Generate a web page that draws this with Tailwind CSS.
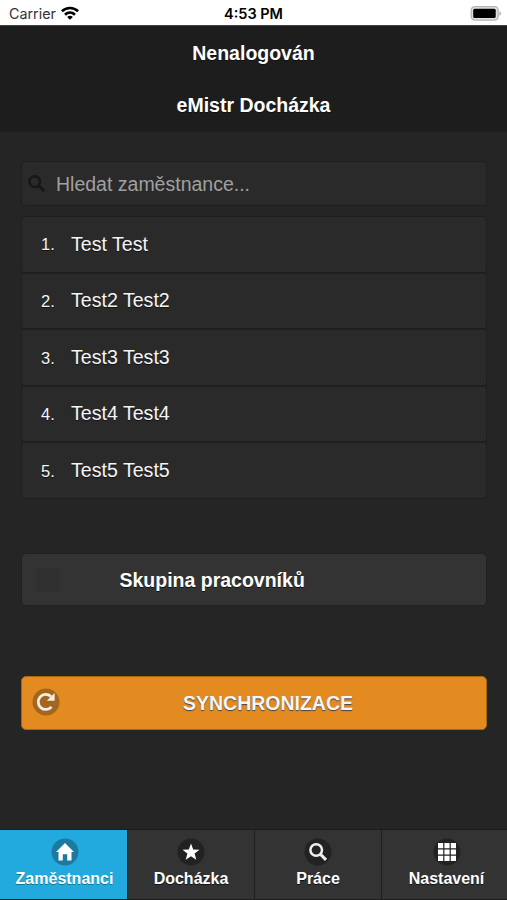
<!DOCTYPE html>
<html lang="cs">
<head>
<meta charset="utf-8">
<title>eMistr Docházka</title>
<script src="https://cdn.jsdelivr.net/npm/@tailwindcss/browser@4"></script>
</head>
<body class="bg-[#252525]">
<div class="w-[507px] h-[900px] flex flex-col overflow-hidden bg-[#252525] font-['Liberation_Sans',Arial,sans-serif] text-white">
  <div class="h-[25px] shrink-0 bg-white text-black grid grid-cols-3 items-center pt-[2px] font-[Inter,sans-serif]">
    <div class="flex items-center gap-[5px] pl-[9px]">
      <span class="text-[14.3px] leading-[20px] text-[#333]">Carrier</span>
      <svg class="w-[18px] h-[14px] -mt-[2px]" viewBox="0 0 18 14" fill="none" stroke="#000" stroke-width="2.7"><path d="M.9 5.2C5.5.9 12.500.9 17.100 5.200M4 8.700C6.900 5.900 11.100 5.900 14 8.700"/><path d="M9 13.800 6.100 10.900Q9 8.800 11.900 10.900Z" fill="#000" stroke="none"/></svg>
    </div>
    <div class="text-center text-[14.5px] font-semibold leading-[20px]">4:53 PM</div>
    <div class="flex justify-end pr-[5px] -mt-[1px]">
      <svg class="w-[32px] h-[15px]" viewBox="0 0 32 15"><rect x="1.200" y=".7" width="27" height="13.400" rx="3.600" fill="#e0e0e0" stroke="#b5b5b5" stroke-width="1.300"/><rect x="3.200" y="2.800" width="22.500" height="9.200" rx="1.500"/><path d="M29.500 5v5q3-2.500 0-5Z" fill="#aaa"/></svg>
    </div>
  </div>
  <header class="h-[107px] shrink-0 bg-[#1d1d1d] border-t border-[#444] text-center font-bold text-[19.5px] leading-[52px] [text-shadow:0_1px_0_#111]">
    <h1 class="h-[52px] pt-[1px]">Nenalogován</h1>
    <h1 class="h-[52px] pt-[1px]">eMistr Docházka</h1>
  </header>
  <main class="flex-1 min-h-0 pl-[21px] pr-[20px] pt-[29px]">
    <div class="h-[45px] flex items-center rounded-[4px] border border-[#1f1f1f] bg-[#2a2a2a] pl-[6px]">
      <svg class="w-[18px] h-[18px]" viewBox="0 0 18 18" fill="none" stroke="#171717" stroke-width="2.600"><circle cx="6.700" cy="6.700" r="5.300"/><path d="m10.700 10.700 5.600 5.600" stroke-width="3"/></svg>
      <span class="ml-[10px] text-[19.5px] leading-[22px] text-[#a0a0a0]">Hledat zaměstnance...</span>
    </div>
    <ol class="mt-[10px] rounded-[4px] border border-[#1f1f1f] bg-[#1f1f1f] overflow-hidden flex flex-col gap-[2px] h-[283px] text-[#f5f5f5] [text-shadow:0_1px_0_#111]">
      <li class="flex-1 flex items-center bg-[#2a2a2a] rounded-[2px] pl-[19px]"><span class="w-[30px] text-[16.5px] pt-[1px]">1.</span><span class="text-[19.6px]">Test Test</span></li>
      <li class="flex-1 flex items-center bg-[#2a2a2a] rounded-[2px] pl-[19px]"><span class="w-[30px] text-[16.5px] pt-[1px]">2.</span><span class="text-[19.6px]">Test2 Test2</span></li>
      <li class="flex-1 flex items-center bg-[#2a2a2a] rounded-[2px] pl-[19px]"><span class="w-[30px] text-[16.5px] pt-[1px]">3.</span><span class="text-[19.6px]">Test3 Test3</span></li>
      <li class="flex-1 flex items-center bg-[#2a2a2a] rounded-[2px] pl-[19px]"><span class="w-[30px] text-[16.5px] pt-[1px]">4.</span><span class="text-[19.6px]">Test4 Test4</span></li>
      <li class="flex-1 flex items-center bg-[#2a2a2a] rounded-[2px] pl-[19px]"><span class="w-[30px] text-[16.5px] pt-[1px]">5.</span><span class="text-[19.6px]">Test5 Test5</span></li>
    </ol>
    <div class="mt-[54px] h-[53px] flex items-center rounded-[5px] border border-[#212121] bg-[#333] pl-[14px] [text-shadow:0_1px_0_#111]">
      <span class="w-[24px] h-[24px] rounded-[3px] bg-[#303030]"></span>
      <span class="ml-[59.5px] text-[19.5px] font-bold leading-[22px]">Skupina pracovníků</span>
    </div>
    <button class="mt-[70px] w-full h-[54px] flex items-center rounded-[5px] border border-[#aa650f] bg-[#e38b21] pl-[10px] pr-[2px]">
      <svg class="w-[28px] h-[28px] shrink-0 -mt-[2px]" viewBox="0 0 28 28"><circle cx="14" cy="14" r="13.500" fill="#a2661f"/><path d="M19.500 18.800A7.500 7.500 0 1 1 18.900 8.500" fill="none" stroke="#f6eee4" stroke-width="2.800"/><path d="M22.600 5v7.800h-7.800Z" fill="#f6eee4"/></svg>
      <span class="flex-1 text-center pl-[10px] pr-[18px] text-[19.5px] leading-[22px] font-bold text-[#f5f5f5] [text-shadow:0_1px_1px_#444]">SYNCHRONIZACE</span>
    </button>
  </main>
  <nav class="h-[71px] shrink-0 grid grid-cols-[128px_127px_127px_125px] border-y border-[#1d1d1d] bg-[#333] text-[16px] leading-[20px] font-bold text-center">
    <a class="flex flex-col items-center pt-[8px] bg-[#22aadf] border-r border-[#1d1d1d] [text-shadow:0_1px_0_#178]">
      <svg class="w-[28px] h-[28px] ml-[2px] shrink-0" viewBox="0 0 28 28"><circle cx="14" cy="14" r="13.500" fill="#1c7a9e"/><path d="m14 5 9 9h-2.500v8.500h-4.300v-6.200h-4.400v6.200H7.500V14H5Z" fill="#fff"/></svg>
      <span class="mt-[3px] ml-[2px]">Zaměstnanci</span>
    </a>
    <a class="flex flex-col items-center pt-[8px] border-r border-[#202020] [text-shadow:0_1px_0_#111]">
      <svg class="w-[28px] h-[28px] shrink-0" viewBox="0 0 28 28"><circle cx="14" cy="14" r="13.500" fill="#222"/><path d="m14 5.500 2.200 5.900 6.300.3-4.900 3.900 1.700 6.100-5.300-3.500-5.300 3.500 1.700-6.100-4.900-3.900 6.300-.3Z" fill="#fff"/></svg>
      <span class="mt-[3px]">Docházka</span>
    </a>
    <a class="flex flex-col items-center pt-[8px] border-r border-[#202020] [text-shadow:0_1px_0_#111]">
      <svg class="w-[28px] h-[28px] shrink-0" viewBox="0 0 28 28"><circle cx="14" cy="14" r="13.500" fill="#222"/><g fill="none" stroke="#eee"><circle cx="12.200" cy="12" r="5.800" stroke-width="2.500"/><path d="m16.200 16 5.800 5.800" stroke-width="3.100"/></g></svg>
      <span class="mt-[3px]">Práce</span>
    </a>
    <a class="flex flex-col items-center pt-[8px] pl-[4px] [text-shadow:0_1px_0_#111]">
      <svg class="w-[28px] h-[28px] shrink-0" viewBox="0 0 28 28"><circle cx="14" cy="14" r="13.500" fill="#222"/><path fill="#fff" d="M5 5h5.200v5.200H5zM11.400 5h5.200v5.200h-5.200zM17.800 5h5.200v5.200h-5.200zM5 11.400h5.200v5.200H5zM11.400 11.400h5.200v5.200h-5.200zM17.800 11.400h5.200v5.200h-5.200zM5 17.800h5.200v5.200H5zM11.400 17.800h5.200v5.200h-5.200zM17.800 17.800h5.200v5.200h-5.200z"/></svg>
      <span class="mt-[3px]">Nastavení</span>
    </a>
  </nav>
</div>
</body>
</html>
